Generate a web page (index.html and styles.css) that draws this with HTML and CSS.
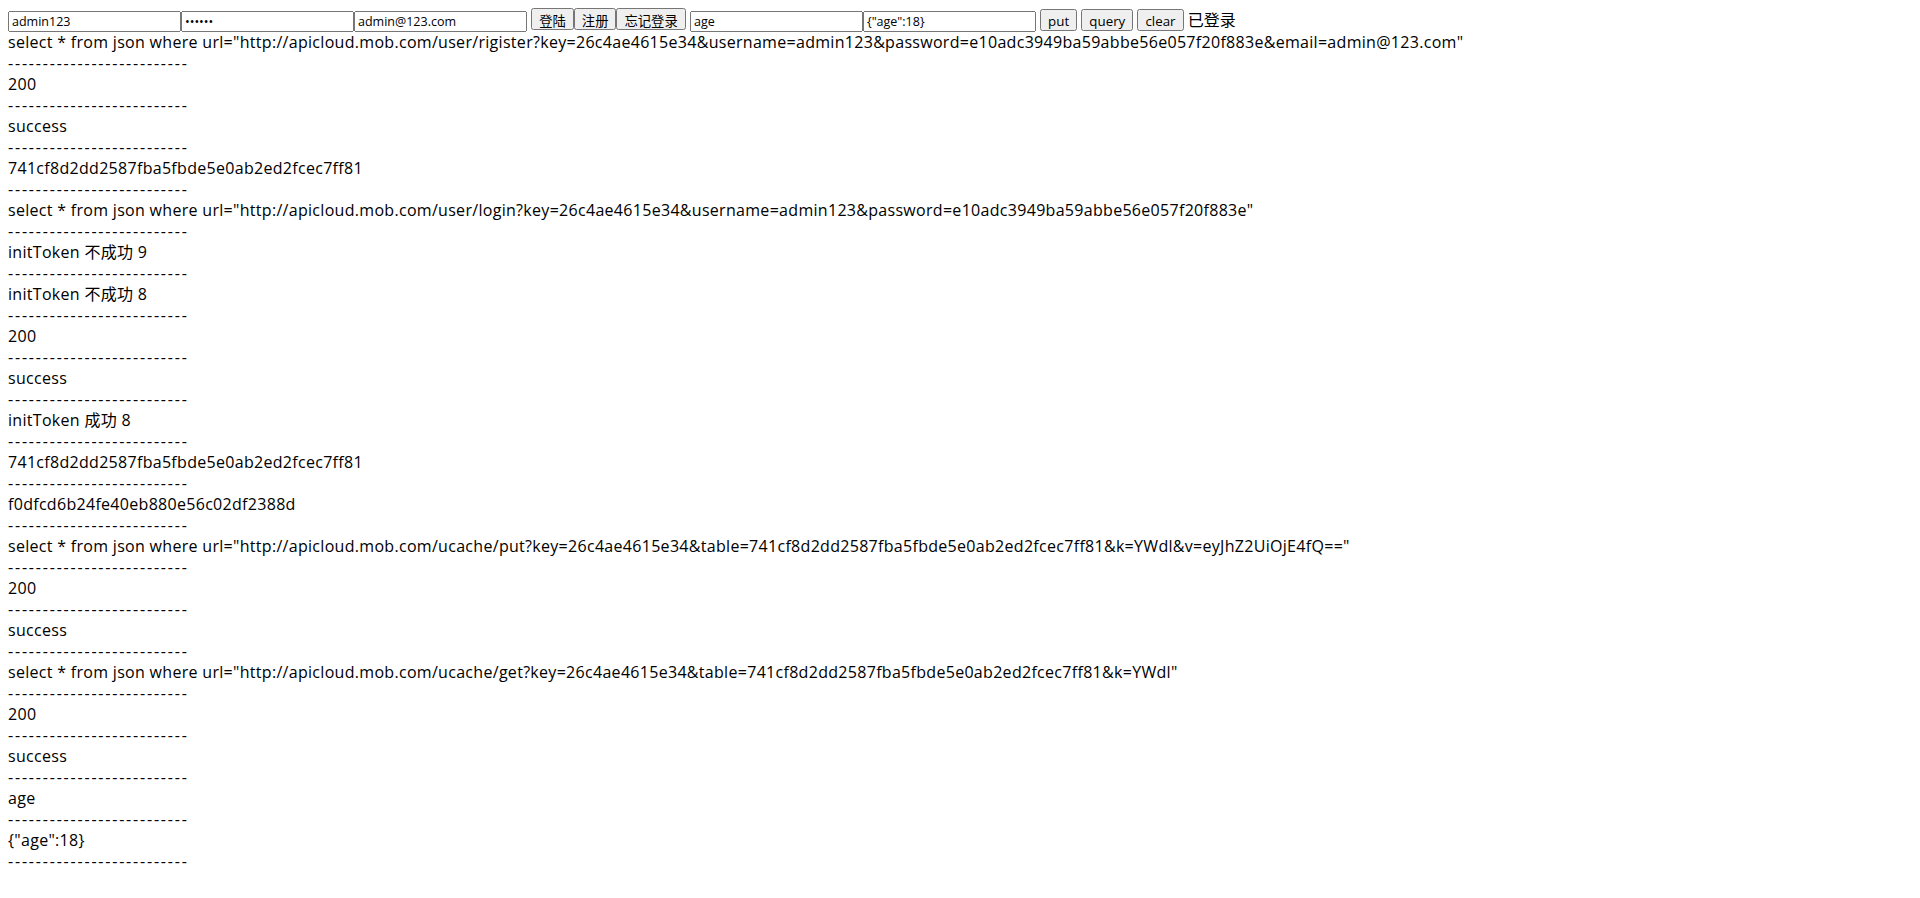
FILE: index.html
```html
<!DOCTYPE html>
<html lang="zh-CN">
<head>
    <meta charset="UTF-8">
    <title>apicloud test</title>
    <link rel="stylesheet" href="styles.css">
</head>
<body>
    <div class="bar">
        <input type="text" value="admin123"><input type="password" value="123456"><input type="text" value="admin@123.com">
        <button>登陆</button><button>注册</button><button>忘记登录</button>
        <input type="text" value="age"><input type="text" value='{"age":18}'>
        <button>put</button>
        <button>query</button>
        <button>clear</button>
        <span class="status">已登录</span>
    </div>
    <div id="log" class="log"></div>

    <script>
        const lines = [
            'select * from json where url="http://apicloud.mob.com/user/rigister?key=26c4ae4615e34&username=admin123&password=e10adc3949ba59abbe56e057f20f883e&email=admin@123.com"',
            '200',
            'success',
            '741cf8d2dd2587fba5fbde5e0ab2ed2fcec7ff81',
            'select * from json where url="http://apicloud.mob.com/user/login?key=26c4ae4615e34&username=admin123&password=e10adc3949ba59abbe56e057f20f883e"',
            'initToken 不成功 9',
            'initToken 不成功 8',
            '200',
            'success',
            'initToken 成功 8',
            '741cf8d2dd2587fba5fbde5e0ab2ed2fcec7ff81',
            'f0dfcd6b24fe40eb880e56c02df2388d',
            'select * from json where url="http://apicloud.mob.com/ucache/put?key=26c4ae4615e34&table=741cf8d2dd2587fba5fbde5e0ab2ed2fcec7ff81&k=YWdl&v=eyJhZ2UiOjE4fQ=="',
            '200',
            'success',
            'select * from json where url="http://apicloud.mob.com/ucache/get?key=26c4ae4615e34&table=741cf8d2dd2587fba5fbde5e0ab2ed2fcec7ff81&k=YWdl"',
            '200',
            'success',
            'age',
            '{"age":18}'
        ];

        // print every line followed by a separator
        const log = document.getElementById("log");
        lines.forEach(function (text) {
            const row = document.createElement("div");
            row.className = "row";
            row.textContent = text;
            log.appendChild(row);
            const sep = document.createElement("div");
            sep.className = "sep";
            sep.textContent = "--------------------------";
            log.appendChild(sep);
        });
    </script>
</body>
</html>
```

FILE: styles.css
```css
body {
    font-family: "Open Sans", "Noto Sans CJK SC", sans-serif;
    font-size: 16px;
    line-height: 21px;
    color: #000;
}
.bar input {
    box-sizing: border-box;
    width: 173px;
    height: 21px;
    font-family: "Open Sans", "Noto Sans CJK SC", sans-serif;
    font-size: 12.5px;
}
.bar button {
    height: 22px;
    font-family: "Open Sans", "Noto Sans CJK SC", sans-serif;
    font-size: 13.333px;
}
.row {
    letter-spacing: 0.3px;
}
.sep {
    letter-spacing: 1.8px;
}
```
